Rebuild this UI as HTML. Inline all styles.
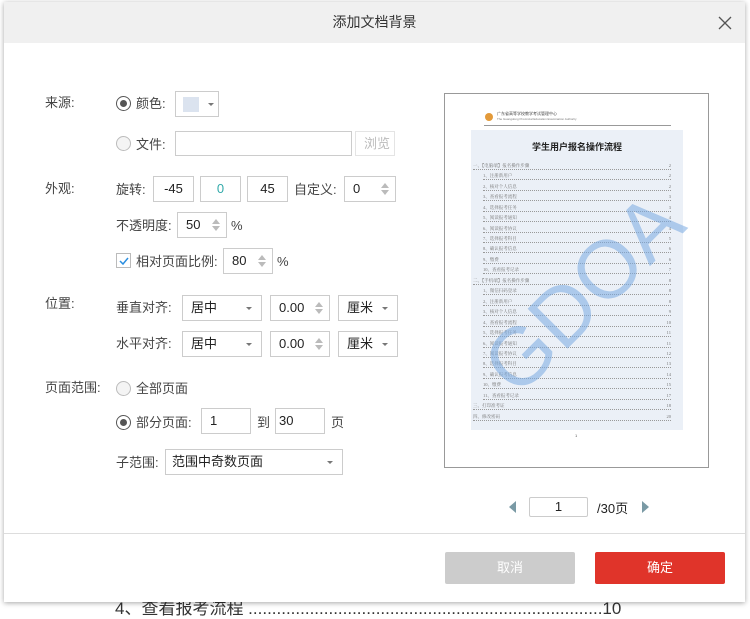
<!DOCTYPE html>
<html><head><meta charset="utf-8"><style>
*{box-sizing:border-box;margin:0;padding:0}
body{width:750px;height:610px;background:#fff;position:relative;overflow:hidden;font-family:"Liberation Sans","Noto Sans CJK SC",sans-serif;font-size:13px;color:#333}
.a{position:absolute}
.dlg{left:4px;top:2px;width:741px;height:600px;background:#fff;box-shadow:0 1px 5px rgba(0,0,0,.35)}
.hdr{left:0;top:0;width:741px;height:41px;background:#f0f0f0;text-align:center;line-height:41px;font-size:14px;color:#333}
.lbl{color:#444;line-height:20px}
.box{border:1px solid #ccc;background:#fff;height:26px;line-height:24px;padding-left:8px;color:#222}
.rad{width:15px;height:15px;border:1px solid #bbb;border-radius:50%;background:#f4f4f4}
.rad.on{border:1.5px solid #555;background:#fff}
.rad.on::after{content:"";position:absolute;left:3px;top:3px;width:7px;height:7px;border-radius:50%;background:#555}
.spin::after{content:"";position:absolute;right:6px;top:6px;border:4px solid transparent;border-bottom:5px solid #bbb;border-top:0}
.spin::before{content:"";position:absolute;right:6px;bottom:6px;border:4px solid transparent;border-top:5px solid #bbb;border-bottom:0}
.dd::after{content:"";position:absolute;right:9px;top:11px;border:3px solid transparent;border-top:3px solid #777}
.toc{font-family:"Liberation Serif","Noto Serif CJK SC",serif;font-size:4.5px;color:#777;position:absolute;left:12px;right:12px;border-bottom:1px dotted #999;height:7px;line-height:6px}
.toc span{position:absolute;right:0;background:#ebf0f7}
</style></head><body>
<div class="a" style="left:115px;top:594px;font-size:17px;color:#333;">4、查看报考流程 ...........................................................................10</div>
<div class="a dlg">
<div class="a hdr">添加文档背景</div>
<svg class="a" style="left:713px;top:13px" width="16" height="16"><path d="M2 2L14 14M14 2L2 14" stroke="#555" stroke-width="1.3"/></svg>

<div class="a lbl" style="left:41px;top:91px">来源:</div>
<div class="a rad on" style="left:112px;top:94px"></div>
<div class="a lbl" style="left:132px;top:92px">颜色:</div>
<div class="a box" style="left:171px;top:89px;width:44px;height:26px"><div class="a" style="left:7px;top:5px;width:16px;height:15px;background:#dbe3ef"></div><div class="a" style="left:32px;top:11px;border:3px solid transparent;border-top:3px solid #777"></div></div>
<div class="a rad" style="left:112px;top:134px"></div>
<div class="a lbl" style="left:132px;top:133px">文件:</div>
<div class="a box" style="left:171px;top:129px;width:177px;height:25px"></div>
<div class="a box" style="left:351px;top:129px;width:40px;height:25px;border-color:#e4e4e4;color:#bbb;padding-left:8px">浏览</div>

<div class="a lbl" style="left:41px;top:177px">外观:</div>
<div class="a lbl" style="left:112px;top:178px">旋转:</div>
<div class="a box" style="left:149px;top:174px;width:41px;text-align:center;padding:0">-45</div>
<div class="a box" style="left:196px;top:174px;width:41px;text-align:center;padding:0;color:#3aa">0</div>
<div class="a box" style="left:243px;top:174px;width:41px;text-align:center;padding:0">45</div>
<div class="a lbl" style="left:290px;top:178px">自定义:</div>
<div class="a box spin" style="left:340px;top:174px;width:52px">0</div>
<div class="a lbl" style="left:112px;top:214px">不透明度:</div>
<div class="a box spin" style="left:173px;top:210px;width:50px">50</div>
<div class="a lbl" style="left:227px;top:214px">%</div>
<div class="a" style="left:112px;top:251px;width:15px;height:15px;border:1px solid #bbb;background:#fff"><svg class="a" style="left:1px;top:1px" width="12" height="12"><path d="M2 6L5 9L10 3" stroke="#2a8ee0" stroke-width="1.5" fill="none"/></svg></div>
<div class="a lbl" style="left:132px;top:250px">相对页面比例:</div>
<div class="a box spin" style="left:219px;top:246px;width:50px">80</div>
<div class="a lbl" style="left:273px;top:250px">%</div>

<div class="a lbl" style="left:41px;top:292px">位置:</div>
<div class="a lbl" style="left:112px;top:296px">垂直对齐:</div>
<div class="a box dd" style="left:178px;top:293px;width:80px">居中</div>
<div class="a box spin" style="left:266px;top:293px;width:60px">0.00</div>
<div class="a box dd" style="left:334px;top:293px;width:60px">厘米</div>
<div class="a lbl" style="left:112px;top:332px">水平对齐:</div>
<div class="a box dd" style="left:178px;top:329px;width:80px">居中</div>
<div class="a box spin" style="left:266px;top:329px;width:60px">0.00</div>
<div class="a box dd" style="left:334px;top:329px;width:60px">厘米</div>

<div class="a lbl" style="left:41px;top:376px">页面范围:</div>
<div class="a rad" style="left:112px;top:379px"></div>
<div class="a lbl" style="left:132px;top:377px">全部页面</div>
<div class="a rad on" style="left:112px;top:413px"></div>
<div class="a lbl" style="left:132px;top:411px">部分页面:</div>
<div class="a box" style="left:197px;top:406px;width:50px">1</div>
<div class="a lbl" style="left:253px;top:411px">到</div>
<div class="a box" style="left:271px;top:406px;width:50px;padding-left:3px">30</div>
<div class="a lbl" style="left:327px;top:411px">页</div>
<div class="a lbl" style="left:112px;top:451px">子范围:</div>
<div class="a box dd" style="left:161px;top:447px;width:178px;padding-left:6px">范围中奇数页面</div>

<div class="a" style="left:440px;top:91px;width:265px;height:375px;border:1px solid #999;background:#fff;overflow:hidden">
 <div class="a" style="left:40px;top:19px;width:8px;height:8px;border-radius:50%;background:#e39a3a"></div>
 <div class="a" style="left:52px;top:17px;font-size:4px;color:#444">广东省高等学校教学考试管理中心</div>
 <div class="a" style="left:52px;top:23px;font-size:3px;color:#777">The Guangdong Provincial Education Examination Authority</div>
 <div class="a" style="left:39px;top:31px;width:187px;height:1px;background:#999"></div>
 <div class="a" style="left:26px;top:36px;width:212px;height:300px;background:#ebf0f7">
  <div class="a" style="left:0;right:0;top:10px;text-align:center;font-size:9px;font-weight:bold;color:#222">学生用户报名操作流程</div>
  <div class="toc" style="top:33px;left:2px">一、【电脑端】报名操作步骤<span>2</span></div>
  <div class="toc" style="top:43px">1、注册新用户<span>2</span></div>
  <div class="toc" style="top:54px">2、核对个人信息<span>2</span></div>
  <div class="toc" style="top:64px">3、查看报考流程<span>3</span></div>
  <div class="toc" style="top:75px">4、选择报考任务<span>3</span></div>
  <div class="toc" style="top:85px">5、阅读报考通知<span>4</span></div>
  <div class="toc" style="top:96px">6、阅读报考协议<span>4</span></div>
  <div class="toc" style="top:106px">7、选择报考科目<span>5</span></div>
  <div class="toc" style="top:116px">8、确认报考信息<span>6</span></div>
  <div class="toc" style="top:127px">9、缴费<span>6</span></div>
  <div class="toc" style="top:137px">10、查看报考记录<span>7</span></div>
  <div class="toc" style="top:148px;left:2px">二、【手机端】报名操作步骤<span>8</span></div>
  <div class="toc" style="top:158px">1、微信扫码登录<span>8</span></div>
  <div class="toc" style="top:169px">2、注册新用户<span>8</span></div>
  <div class="toc" style="top:179px">3、核对个人信息<span>9</span></div>
  <div class="toc" style="top:190px">4、查看报考流程<span>10</span></div>
  <div class="toc" style="top:200px">5、选择报考任务<span>11</span></div>
  <div class="toc" style="top:211px">6、阅读报考通知<span>11</span></div>
  <div class="toc" style="top:221px">7、阅读报考协议<span>12</span></div>
  <div class="toc" style="top:231px">8、选择报考科目<span>13</span></div>
  <div class="toc" style="top:242px">9、确认报考信息<span>14</span></div>
  <div class="toc" style="top:252px">10、缴费<span>15</span></div>
  <div class="toc" style="top:263px">11、查看报考记录<span>17</span></div>
  <div class="toc" style="top:273px;left:2px">三、打印准考证<span>18</span></div>
  <div class="toc" style="top:284px;left:2px">四、修改密码<span>20</span></div>
 </div>
 <div class="a" style="left:130px;top:339px;font-size:4px;color:#555">1</div>
 <div class="a" style="left:9px;top:152px;width:260px;height:96px;line-height:96px;font-size:82px;color:rgba(120,170,225,.55);transform:rotate(-45deg);font-family:'Liberation Sans',sans-serif;text-align:center">GDOA</div>
</div>

<div class="a" style="left:505px;top:499px;border:6px solid transparent;border-right:7px solid #7a9aa5;border-left:0"></div>
<div class="a" style="left:525px;top:495px;width:59px;height:20px;border:1px solid #ccc;border-radius:2px;text-align:center;line-height:18px;color:#222">1</div>
<div class="a" style="left:593px;top:496px;color:#222">/30页</div>
<div class="a" style="left:638px;top:499px;border:6px solid transparent;border-left:7px solid #7a9aa5;border-right:0"></div>

<div class="a" style="left:0;top:531px;width:741px;height:1px;background:#ddd"></div>
<div class="a" style="left:441px;top:550px;width:130px;height:32px;background:#cccccc;border-radius:2px;color:#fff;text-align:center;line-height:32px">取消</div>
<div class="a" style="left:591px;top:550px;width:130px;height:32px;background:#e0342a;border-radius:2px;color:#fff;text-align:center;line-height:32px">确定</div>
</div>
</body></html>
